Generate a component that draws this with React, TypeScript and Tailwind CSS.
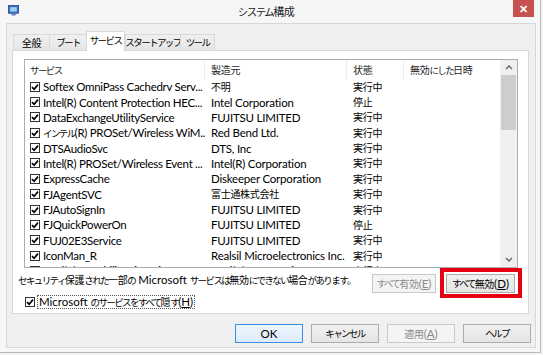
import React from "react";

const SPLIT = /([\u3040-\u30ff]+|[\u3000-\u303f\u4e00-\u9fff\uff00-\uffef]+)/;
const KANA = /^[\u3040-\u30ff]+$/;
const KANJI = /^[\u3000-\u303f\u4e00-\u9fff\uff00-\uffef]+$/;

// 日本語部分は Meiryo UI 風に詰めて描く
const T = ({ s, big }: { s: string; big?: boolean }) => {
  const parts = s.split(SPLIT).filter(Boolean);
  return (
    <>
      {parts.map((p, i) => {
        if (KANA.test(p))
          return (
            <span key={i} className={big ? "text-[10.5px] tracking-[-1.5px]" : "text-[9.5px] tracking-[-1.6px]"}>
              {p}
            </span>
          );
        if (KANJI.test(p))
          return (
            <span key={i} className={big ? "text-[11px] tracking-[-0.5px]" : "text-[10px] tracking-[-0.3px]"}>
              {p}
            </span>
          );
        return <React.Fragment key={i}>{p}</React.Fragment>;
      })}
    </>
  );
};

const Check = () => (
  <span className="flex h-[10px] w-[10px] shrink-0 items-center justify-center border border-[#333] bg-white">
    <svg viewBox="0 0 8 8" className="h-[8px] w-[8px]">
      <path d="M1 4.2 L3.1 6.3 L7 1.6" stroke="#000" strokeWidth="1.7" fill="none" />
    </svg>
  </span>
);

interface Service {
  name: string;
  maker: string;
  state: string;
}

const services: Service[] = [
  { name: "Softex OmniPass Cachedrv Serv...", maker: "不明", state: "実行中" },
  { name: "Intel(R) Content Protection HEC...", maker: "Intel Corporation", state: "停止" },
  { name: "DataExchangeUtilityService", maker: "FUJITSU LIMITED", state: "実行中" },
  { name: "インテル(R) PROSet/Wireless WiM...", maker: "Red Bend Ltd.", state: "実行中" },
  { name: "DTSAudioSvc", maker: "DTS, Inc", state: "実行中" },
  { name: "Intel(R) PROSet/Wireless Event ...", maker: "Intel(R) Corporation", state: "実行中" },
  { name: "ExpressCache", maker: "Diskeeper Corporation", state: "実行中" },
  { name: "FJAgentSVC", maker: "富士通株式会社", state: "実行中" },
  { name: "FJAutoSignIn", maker: "FUJITSU LIMITED", state: "実行中" },
  { name: "FJQuickPowerOn", maker: "FUJITSU LIMITED", state: "停止" },
  { name: "FUJ02E3Service", maker: "FUJITSU LIMITED", state: "実行中" },
  { name: "IconMan_R", maker: "Realsil Microelectronics Inc.", state: "実行中" },
  { name: "Intel(R) Capability Licensing Se...", maker: "Intel(R) Corporation", state: "実行中" },
];

const tabs = [
  { label: "全般", w: "w-[36px]" },
  { label: "ブート", w: "w-[37px]" },
  { label: "サービス", w: "w-[39px]", active: true },
  { label: "スタートアップ", w: "w-[55px]" },
  { label: "ツール", w: "w-[35px]" },
];

const Btn = ({
  children,
  disabled,
  primary,
  className = "",
}: {
  children: React.ReactNode;
  disabled?: boolean;
  primary?: boolean;
  className?: string;
}) => (
  <div
    className={
      "flex h-[19px] items-center justify-center whitespace-nowrap border leading-none " +
      (disabled
        ? "border-[#c9c9c9] bg-[#f4f4f4] text-[#8a8a8a] "
        : primary
        ? "border-[#3c8fe0] bg-gradient-to-b from-[#eef5fc] to-[#dcecfc] text-black "
        : "border-[#acacac] bg-gradient-to-b from-[#f0f0f0] to-[#e5e5e5] text-black ") +
      className
    }
  >
    {children}
  </div>
);

export default function App() {
  return (
    <div className="h-[355px] w-[543px] overflow-hidden bg-[#f4f4f4] font-['Lato','Noto_Sans_CJK_JP',sans-serif] text-[11.5px] text-black">
      <div className="h-[353px] w-[541px] border-r border-b border-[#b9b9b9] bg-[#f6f6f6]">
        {/* タイトルバー */}
        <div className="flex h-[23px] items-start">
          <svg viewBox="0 0 10 10" className="ml-[8px] mt-[5px] h-[11px] w-[11px]">
            <rect x="0.5" y="0.5" width="9" height="7" fill="#3a6fc4" stroke="#2a4f94" strokeWidth="0.8" />
            <rect x="2" y="2" width="6" height="4" fill="#9ed0f4" />
            <rect x="3" y="8" width="4" height="1.5" fill="#5b7fb8" />
          </svg>
          <div className="flex-1 whitespace-nowrap pt-[4px] text-center leading-[16px] text-[#222]">
            <T s="システム構成" big />
          </div>
          <div className="mr-[6px] flex h-[17px] w-[21px] items-center justify-center bg-[#c75050] text-[11px] font-bold leading-none text-white">
            ✕
          </div>
        </div>

        {/* クライアント領域 */}
        <div className="ml-[6px] h-[325px] w-[530px] border border-[#d6d6d6] bg-[#f0f0f0] pt-[7px]">
          {/* タブ */}
          <div className="ml-[6px] flex h-[19px] items-end">
            {tabs.map((t, i) =>
              t.active ? (
                <div
                  key={t.label}
                  className={`${t.w} relative z-10 -mb-px flex h-[20px] items-start justify-center whitespace-nowrap border border-b-0 border-[#d9d9d9] bg-white pt-[2px] leading-[14px]`}
                >
                  <T s={t.label} />
                </div>
              ) : (
                <div
                  key={t.label}
                  className={`${t.w} flex h-[16px] items-center justify-center whitespace-nowrap border-t border-l border-[#d9d9d9] bg-gradient-to-b from-[#f0f0f0] to-[#e5e5e5] leading-[14px] ${
                    i === tabs.length - 1 ? "border-r" : ""
                  }`}
                >
                  <T s={t.label} />
                </div>
              )
            )}
          </div>

          {/* タブページ */}
          <div className="ml-[5px] h-[264px] w-[517px] border border-[#d9d9d9] bg-white pt-[8px]">
            {/* リスト */}
            <div className="ml-[11px] flex h-[209px] w-[494px] border border-[#abadb3] bg-white">
              <div className="w-[475px] overflow-hidden">
                <div className="flex h-[19px] items-center whitespace-nowrap leading-[19px] text-[#1e1e1e]">
                  <div className="w-[180px] border-r border-[#ececec] pl-[5px]">
                    <T s="サービス" />
                  </div>
                  <div className="w-[142px] border-r border-[#ececec] pl-[6px]">
                    <T s="製造元" />
                  </div>
                  <div className="w-[57px] border-r border-[#ececec] pl-[6px]">
                    <T s="状態" />
                  </div>
                  <div className="flex-1 pl-[6px]">
                    <T s="無効にした日時" />
                  </div>
                </div>
                {services.map((s) => (
                  <div key={s.name} className="flex h-[15.36px] items-center whitespace-nowrap leading-[15px]">
                    <div className="flex w-[180px] items-center gap-[3px] overflow-hidden pl-[5px]">
                      <Check />
                      <span className="tracking-[-0.3px]">
                        <T s={s.name} />
                      </span>
                    </div>
                    <div className="w-[142px] overflow-hidden pl-[6px] tracking-[-0.2px]">
                      <T s={s.maker} />
                    </div>
                    <div className="w-[57px] pl-[6px]">
                      <T s={s.state} />
                    </div>
                  </div>
                ))}
              </div>
              {/* スクロールバー */}
              <div className="flex w-[17px] flex-col bg-[#f0f0f0]">
                <div className="flex h-[15px] items-center justify-center">
                  <svg viewBox="0 0 8 5" className="h-[5px] w-[8px]">
                    <path d="M1 4 L4 1 L7 4" stroke="#606060" strokeWidth="1.3" fill="none" />
                  </svg>
                </div>
                <div className="flex-1 px-[1px]">
                  <div className="h-[55px] bg-[#cdcdcd]" />
                </div>
                <div className="flex h-[15px] items-center justify-center">
                  <svg viewBox="0 0 8 5" className="h-[5px] w-[8px]">
                    <path d="M1 1 L4 4 L7 1" stroke="#606060" strokeWidth="1.3" fill="none" />
                  </svg>
                </div>
              </div>
            </div>

            {/* 注意書きとボタン */}
            <div className="mt-[6px] flex h-[20px] items-start">
              <div className="ml-[5px] flex-1 whitespace-nowrap leading-[12px]">
                <T s="セキュリティ保護された一部の Microsoft サービスは無効にできない場合があります。" />
              </div>
              <Btn disabled className="w-[64px]">
                <T s="すべて有効(" />
                <u>E</u>)
              </Btn>
              <div className="relative ml-[10px] mr-[13px]">
                <Btn className="w-[69px]">
                  <T s="すべて無効(" />
                  <u>D</u>)
                </Btn>
                <span className="absolute -top-[6px] -bottom-[5px] -left-[6px] -right-[7px] border-[4px] border-[#e60012]" />
              </div>
            </div>

            <div className="ml-[12px] mt-[1px] flex h-[13px] items-center gap-[2px]">
              <Check />
              <span className="whitespace-nowrap border border-dotted border-[#555] px-[1px] leading-[11px]">
                Microsoft <T s="のサービスをすべて隠す(" />
                <u>H</u>)
              </span>
            </div>
          </div>

          {/* 下部ボタン */}
          <div className="mt-[10px] flex justify-end gap-[8px] pr-[4px]">
            <Btn primary className="w-[68px]">
              OK
            </Btn>
            <Btn className="w-[68px]">
              <T s="キャンセル" />
            </Btn>
            <Btn disabled className="w-[68px]">
              <T s="適用(" />
              <u>A</u>)
            </Btn>
            <Btn className="w-[68px]">
              <T s="ヘルプ" />
            </Btn>
          </div>
        </div>
      </div>
    </div>
  );
}
